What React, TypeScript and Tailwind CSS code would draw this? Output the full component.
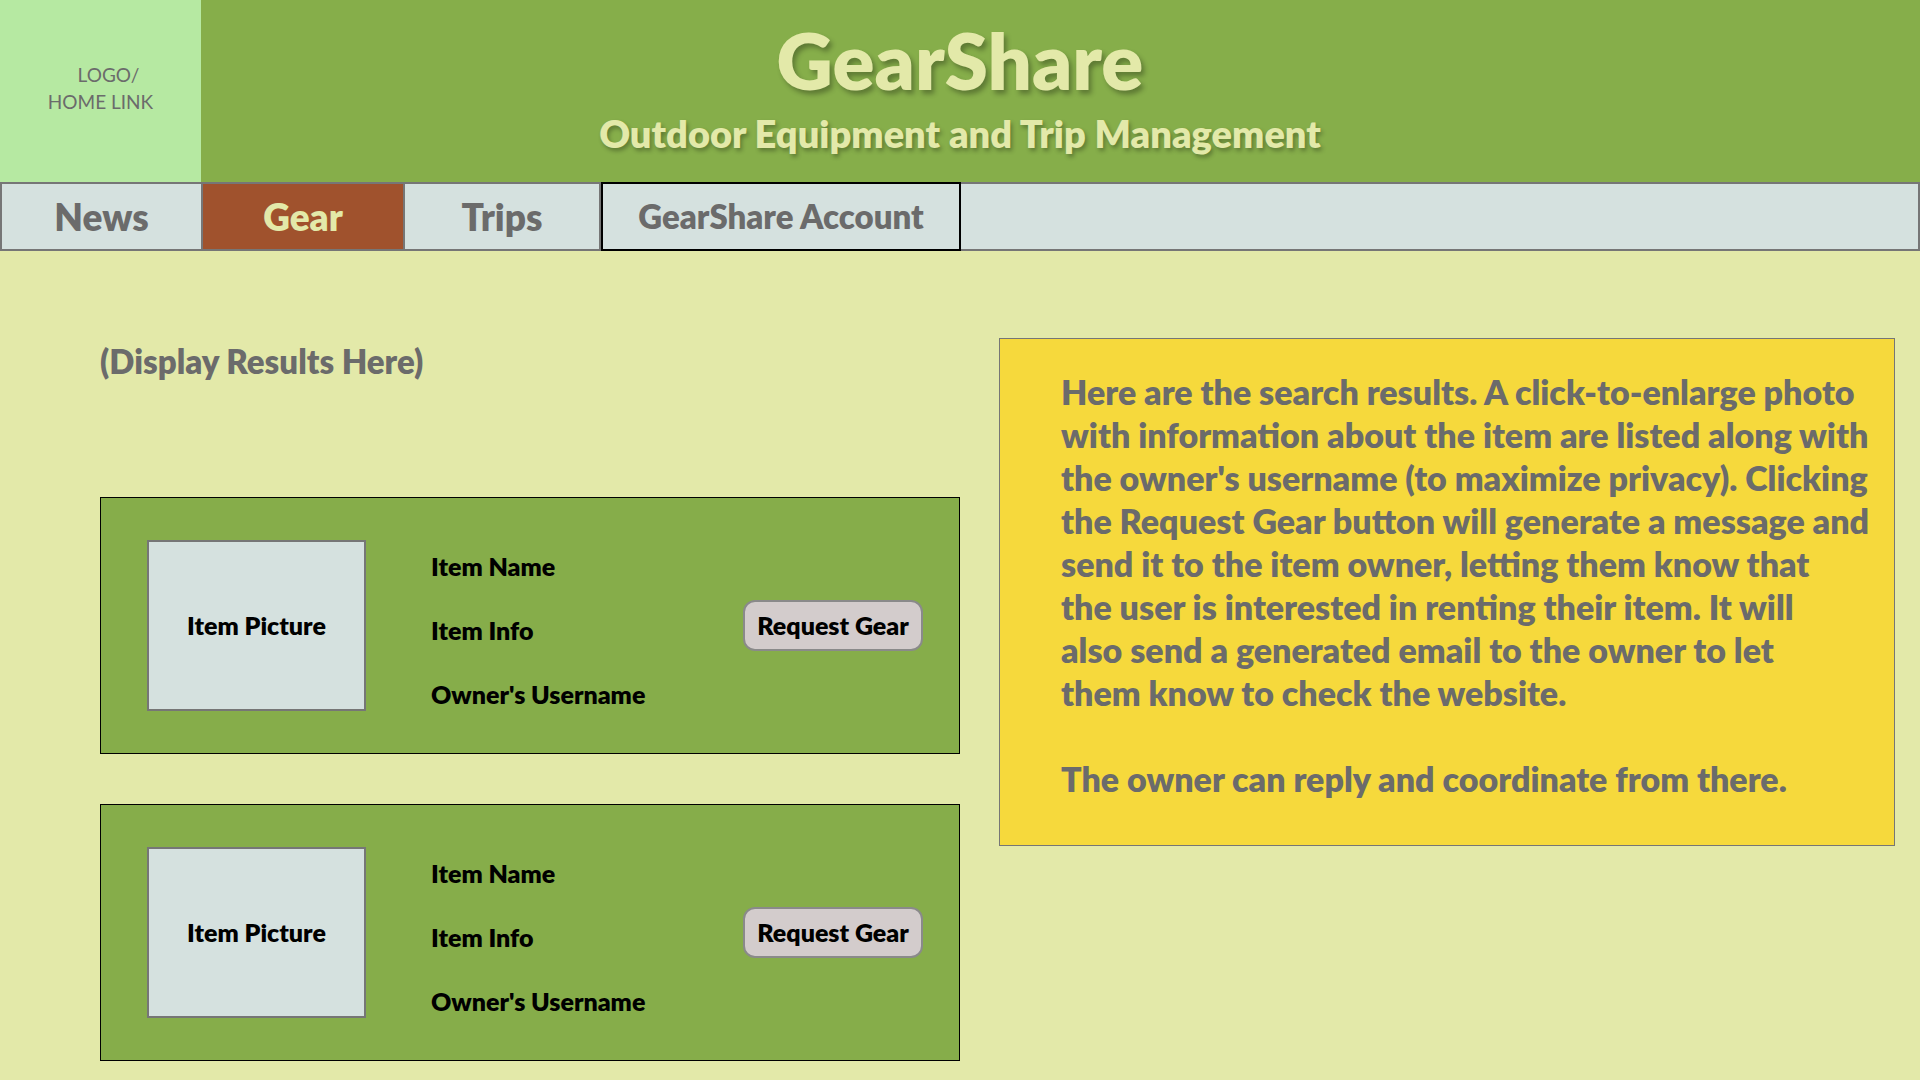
const tabs = [
  { label: "News", width: "w-[201px]", active: false },
  { label: "Gear", width: "w-[202px]", active: true },
  { label: "Trips", width: "w-[196px]", active: false },
];

const infoLines = [
  "Here are the search results. A click-to-enlarge photo",
  "with information about the item are listed along with",
  "the owner's username (to maximize privacy). Clicking",
  "the Request Gear button will generate a message and",
  "send it to the item owner, letting them know that",
  "the user is interested in renting their item. It will",
  "also send a generated email to the owner to let",
  "them know to check the website.",
];

function ResultCard() {
  return (
    <div className="flex h-[257px] items-center border border-black bg-[#86ad4a] pl-[46px] pr-[36px]">
      <div className="flex h-[171px] w-[219px] shrink-0 items-center justify-center border-2 border-[#767676] bg-[#d5e1df] text-[25px] font-extrabold text-black">
        Item Picture
      </div>
      <div className="ml-[65px] mt-[8px] flex flex-col gap-[26px] text-[25px] font-extrabold leading-[38px] text-black">
        <span>Item Name</span>
        <span>Item Info</span>
        <span>Owner's Username</span>
      </div>
      <button className="ml-auto flex h-[51px] w-[180px] items-center justify-center rounded-[12px] border-2 border-[#8a8a8a] bg-[#d3cccc] text-[25px] font-extrabold text-black">
        Request Gear
      </button>
    </div>
  );
}

export default function App() {
  return (
    <div className="min-h-screen w-full bg-[#e3e9a9] font-['Lato','Liberation_Sans',sans-serif]">
      {/* Header */}
      <header className="grid h-[182px] grid-cols-[201px_1fr_201px] bg-[#86ae4a]">
        <div className="flex flex-col items-center justify-center pb-[6px] bg-[#b6e9a2] text-[19px] leading-[27px] text-[#6b6b6b]">
          <span className="pl-[16px]">LOGO/</span>
          <span>HOME LINK</span>
        </div>
        <div className="flex flex-col items-center pt-[13px]">
          <h1 className="text-[78px] font-extrabold leading-[94px] text-[#e3e9a9] [text-shadow:3px_4px_5px_rgba(0,0,0,0.3)]">
            GearShare
          </h1>
          <p className="mt-[4px] text-[38px] font-extrabold leading-[44px] text-[#e3e9a9] [text-shadow:2px_3px_4px_rgba(0,0,0,0.3)]">
            Outdoor Equipment and Trip Management
          </p>
        </div>
        <div />
      </header>

      {/* Nav */}
      <nav className="flex h-[69px] border-2 border-[#767676] bg-[#d5e1df]">
        {tabs.map((tab) => (
          <div
            key={tab.label}
            className={`flex ${tab.width} items-center justify-center border-r-2 border-[#767676] text-[37px] font-extrabold ${
              tab.active ? "bg-[#a0522d] text-[#e3e9a9]" : "text-[#6b6b6b]"
            }`}
          >
            {tab.label}
          </div>
        ))}
        <div className="-my-[2px] flex w-[360px] items-center justify-center border-2 border-black text-[33px] font-extrabold text-[#6b6b6b]">
          GearShare Account
        </div>
      </nav>

      {/* Content */}
      <main className="flex gap-[39px] pl-[100px] pr-[25px] pb-[20px]">
        <section className="w-[860px] pt-[90px]">
          <h2 className="text-[33px] font-extrabold leading-[40px] text-[#6b6b6b]">(Display Results Here)</h2>
          <div className="mt-[116px] flex flex-col gap-[50px]">
            <ResultCard />
            <ResultCard />
          </div>
        </section>

        <aside className="mt-[87px] h-[508px] w-[896px] border border-[#767676] bg-[#f6d93c] pl-[61px] pt-[31px]">
          <div className="text-[34px] font-extrabold leading-[43px] text-[#6b6b6b]">
            {infoLines.map((line) => (
              <p key={line} className="whitespace-nowrap">
                {line}
              </p>
            ))}
            <p className="mt-[43px] whitespace-nowrap">The owner can reply and coordinate from there.</p>
          </div>
        </aside>
      </main>
    </div>
  );
}
